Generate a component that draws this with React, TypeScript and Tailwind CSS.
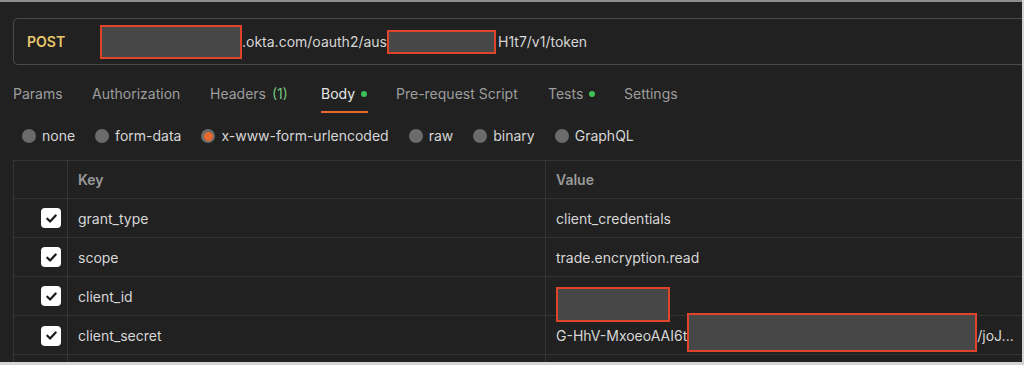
import React from "react";

function Check() {
  return (
    <div className="w-[20px] h-[20px] rounded-[4px] bg-white flex items-center justify-center">
      <svg width="13" height="13" viewBox="0 0 14 14" fill="none">
        <path d="M2.5 7.3l3 3L11.5 3.8" stroke="#1a1a1a" strokeWidth="2.4" strokeLinecap="round" strokeLinejoin="round" />
      </svg>
    </div>
  );
}

function Radio({ label, selected }: { label: string; selected?: boolean }) {
  return (
    <div className="flex items-center gap-[6px]">
      <div className="w-[14px] h-[14px] rounded-full bg-[#6b6b6b] flex items-center justify-center">
        {selected && <div className="w-[9px] h-[9px] rounded-full bg-[#e8692f]" />}
      </div>
      <span className="text-[#d6d6d6]">{label}</span>
    </div>
  );
}

function Redact({ w, h }: { w: number; h: number }) {
  return (
    <div
      className="bg-[#474747] border-2 border-[#e0452c] shrink-0"
      style={{ width: w, height: h }}
    />
  );
}

const rows = [
  { key: "grant_type", value: "client_credentials" },
  { key: "scope", value: "trade.encryption.read" },
  { key: "client_id", value: "" },
  { key: "client_secret", value: "" },
];

export default function App() {
  return (
    <div
      className="w-[1024px] h-[365px] bg-[#d4d4d4] overflow-hidden text-[14px]"
      style={{ fontFamily: "Inter, 'Noto Sans', sans-serif" }}
    >
      <div className="w-[1022px] h-[362px] bg-[#212121] border-t-2 border-[#8e8e8e] overflow-hidden flex flex-col">
        {/* URL bar */}
        <div className="ml-[13px] mt-[16px] h-[47px] border border-r-0 border-[#4a4a4a] rounded-l-[5px] flex items-center shrink-0">
          <span className="ml-[13px] w-[73px] text-[#e9c96b] font-semibold">POST</span>
          <Redact w={142} h={34} />
          <span className="text-[#d6d6d6]">.okta.com/oauth2/aus</span>
          <Redact w={109} h={24} />
          <span className="text-[#d6d6d6] ml-[2px]">H1t7/v1/token</span>
        </div>

        {/* Tabs */}
        <div className="ml-[13px] mt-[19px] flex text-[#9d9d9d] leading-[20px] shrink-0">
          <div className="w-[79px]">
            <div className="pb-[7px] border-b-2 border-transparent w-fit">Params</div>
          </div>
          <div className="w-[118px]">
            <div className="pb-[7px] border-b-2 border-transparent w-fit">Authorization</div>
          </div>
          <div className="w-[111px]">
            <div className="pb-[7px] border-b-2 border-transparent w-fit">
              Headers <span className="ml-[2px] text-[#72c47a]">(1)</span>
            </div>
          </div>
          <div className="w-[75px]">
            <div className="pb-[7px] border-b-2 border-[#e5682c] text-[#e8e8e8] flex items-center w-[47px]">
              Body
              <span className="ml-[6px] w-[6px] h-[6px] rounded-full bg-[#3fbf57]" />
            </div>
          </div>
          <div className="w-[152px]">
            <div className="pb-[7px] border-b-2 border-transparent w-fit">Pre-request Script</div>
          </div>
          <div className="w-[76px]">
            <div className="pb-[7px] border-b-2 border-transparent flex items-center w-fit">
              Tests
              <span className="ml-[6px] w-[6px] h-[6px] rounded-full bg-[#3fbf57]" />
            </div>
          </div>
          <div>
            <div className="pb-[7px] border-b-2 border-transparent w-fit">Settings</div>
          </div>
        </div>

        {/* Radios */}
        <div className="ml-[22px] mt-[13px] flex gap-[20px] leading-[20px] shrink-0">
          <Radio label="none" />
          <Radio label="form-data" />
          <Radio label="x-www-form-urlencoded" selected />
          <Radio label="raw" />
          <Radio label="binary" />
          <Radio label="GraphQL" />
        </div>

        {/* Table */}
        <div className="ml-[13px] mt-[14px] border-l border-t border-[#343434] shrink-0">
          <div className="grid grid-cols-[54px_478px_1fr] h-[38px] border-b border-[#343434]">
            <div className="border-r border-[#343434]" />
            <div className="border-r border-[#343434] pl-[10px] flex items-center font-semibold text-[#9a9a9a]">Key</div>
            <div className="pl-[10px] flex items-center font-semibold text-[#9a9a9a]">Value</div>
          </div>
          {rows.map((r) => (
            <div key={r.key} className="grid grid-cols-[54px_478px_1fr] h-[39px] border-b border-[#343434]">
              <div className="border-r border-[#343434] flex items-center justify-end pr-[6px]">
                <Check />
              </div>
              <div className="border-r border-[#343434] pl-[10px] flex items-center text-[#d6d6d6]">{r.key}</div>
              <div className="relative pl-[10px] flex items-center text-[#d6d6d6] whitespace-nowrap">
                {r.key === "client_id" && (
                  <div className="absolute left-[10px] top-[10px] z-10">
                    <Redact w={114} h={35} />
                  </div>
                )}
                {r.key === "client_secret" ? (
                  <>
                    <span>G-HhV-MxoeoAAI6t</span>
                    <div className="relative top-[-3px] z-10">
                      <Redact w={290} h={39} />
                    </div>
                    <span>/joJ...</span>
                  </>
                ) : (
                  r.value
                )}
              </div>
            </div>
          ))}
          <div className="grid grid-cols-[54px_478px_1fr] h-[39px]">
            <div className="border-r border-[#343434]" />
            <div className="border-r border-[#343434]" />
            <div />
          </div>
        </div>
      </div>
    </div>
  );
}
